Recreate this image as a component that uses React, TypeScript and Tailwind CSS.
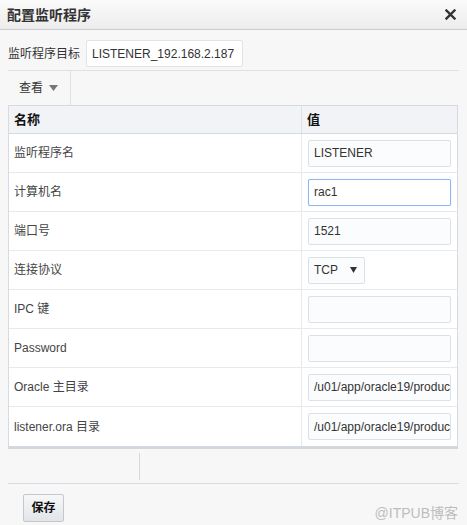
import React from "react";

const rows: { label: string; kind: "input" | "focus" | "select" | "empty"; value?: string }[] = [
  { label: "监听程序名", kind: "input", value: "LISTENER" },
  { label: "计算机名", kind: "focus", value: "rac1" },
  { label: "端口号", kind: "input", value: "1521" },
  { label: "连接协议", kind: "select", value: "TCP" },
  { label: "IPC 键", kind: "empty" },
  { label: "Password", kind: "empty" },
  { label: "Oracle 主目录", kind: "input", value: "/u01/app/oracle19/product/19.0.0/dbhome_1" },
  { label: "listener.ora 目录", kind: "input", value: "/u01/app/oracle19/product/19.0.0/dbhome_1/network/admin" },
];

export default function App() {
  return (
    <div className="w-[467px] h-[525px] bg-[#f7f7f7] flex flex-col overflow-hidden font-['Liberation_Sans','Noto_Sans_CJK_SC',sans-serif] text-[#333]">
      {/* title bar */}
      <div className="h-[30px] shrink-0 border-b border-[#c9cdd3] bg-gradient-to-b from-[#fbfbfb] to-[#ececec] flex items-center justify-between pl-[7px] pr-[11px]">
        <span className="text-[14px] font-bold leading-none">配置监听程序</span>
        <svg width="11" height="11" viewBox="0 0 11 11">
          <path d="M1.5 1.5 L9.5 9.5 M9.5 1.5 L1.5 9.5" stroke="#333" strokeWidth="2.4" strokeLinecap="square" />
        </svg>
      </div>

      <div className="px-[8px] flex flex-col">
        {/* target row */}
        <div className="flex items-center pt-[10px]">
          <span className="text-[12px] w-[78px]">监听程序目标</span>
          <div className="w-[157px] h-[27px] border border-[#e0e3e7] bg-white rounded-[2px] flex items-center pl-[5px] text-[12px] whitespace-nowrap overflow-hidden">
            LISTENER_192.168.2.187
          </div>
        </div>
        <div className="h-[3px]" />
        {/* toolbar */}
        <div className="border-t border-[#dde1e6] h-[35px] flex">
          <div className="w-[63px] border-r border-[#dde1e6] flex items-center pl-[11px] pb-[1px]">
            <span className="text-[12px]">查看</span>
            <svg width="9" height="6" viewBox="0 0 9 6" className="ml-[6px]">
              <path d="M0 0 L9 0 L4.5 6 Z" fill="#777" />
            </svg>
          </div>
        </div>

        {/* table */}
        <div className="w-[450px] border border-[#d6dbe1] border-b-[3px] border-b-[#d3d8de] bg-white">
          <div className="flex h-[28px] bg-[#f1f3f6] border-b border-[#d6dbe1]">
            <div className="w-[293px] border-r border-[#dfe3e8] flex items-center pl-[5px] text-[13px] font-bold text-[#111]">名称</div>
            <div className="flex-1 flex items-center pl-[5px] text-[13px] font-bold text-[#111]">值</div>
          </div>
          {rows.map((r, i) => (
            <div key={i} className={`flex h-[39px] ${i < rows.length - 1 ? "border-b border-[#e6e9ed]" : ""}`}>
              <div className="w-[293px] border-r border-[#e6e9ed] flex items-center pl-[5px] text-[12px] text-[#444]">{r.label}</div>
              <div className="flex-1 flex items-center pl-[6px]">
                {r.kind === "select" ? (
                  <div className="w-[57px] h-[27px] border border-[#dde1e6] bg-[#fbfcfd] rounded-[2px] flex items-center justify-between pl-[5px] pr-[7px] text-[12px]">
                    <span>{r.value}</span>
                    <svg width="7" height="6" viewBox="0 0 7 6">
                      <path d="M0 0 L7 0 L3.5 6 Z" fill="#333" />
                    </svg>
                  </div>
                ) : (
                  <div
                    className={`w-[143px] h-[27px] rounded-[2px] flex items-center pl-[5px] text-[12px] whitespace-nowrap overflow-hidden ${
                      r.kind === "focus"
                        ? "border border-[#8fb6f4] bg-white shadow-[0_0_1px_#a9c7f7]"
                        : "border border-[#dde1e6] bg-[#fbfcfd]"
                    }`}
                  >
                    {r.value ?? ""}
                  </div>
                )}
              </div>
            </div>
          ))}
        </div>

        {/* lower toolbar */}
        <div className="h-[34px] flex items-center">
          <div className="w-[132px] h-[27px] border-r border-[#d6dbe1]" />
        </div>
        <div className="border-t border-[#d6dbe1] flex items-start justify-between pt-[10px] pl-[15px]">
          <button className="w-[41px] h-[28px] border border-[#c4c8cd] rounded-[2px] bg-gradient-to-b from-[#f6f7f8] to-[#e2e5e8] text-[12px] font-bold text-[#111] flex items-center justify-center">
            保存
          </button>
          <span className="mt-[12px] mr-[1px] text-[14px] text-[#bdbdbd] leading-none">@ITPUB博客</span>
        </div>
      </div>
    </div>
  );
}
